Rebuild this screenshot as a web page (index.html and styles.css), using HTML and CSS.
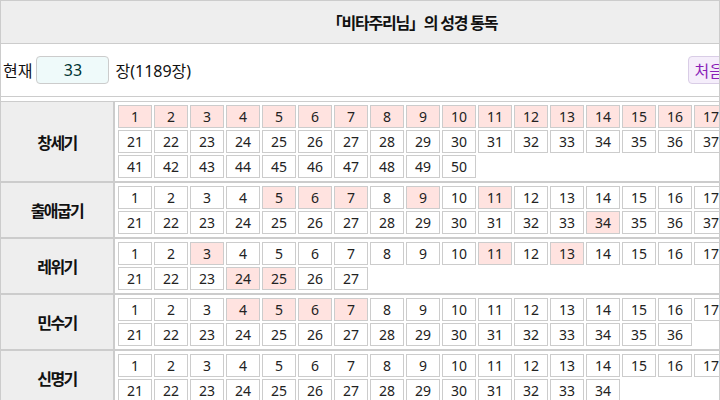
FILE: index.html
```html
<!DOCTYPE html>
<html lang="ko">
<head>
<meta charset="utf-8">
<title>성경 통독</title>
<link rel="stylesheet" href="styles.css">
</head>
<body>
<div class="frame">
  <div class="sheet">
    <div class="title">「비타주리님」의 성경 통독</div>
    <div class="controls">
      <span class="lbl">현재</span>
      <span class="count">33</span>
      <span class="total">장(1189장)</span>
      <button class="btn">처음</button>
    </div>
    <table class="books">
      <tr>
        <th class="book">창세기</th>
        <td class="chapters"><div class="grid">
<span class="ch read">1</span><span class="ch read">2</span><span class="ch read">3</span><span class="ch read">4</span><span class="ch read">5</span><span class="ch read">6</span><span class="ch read">7</span><span class="ch read">8</span><span class="ch read">9</span><span class="ch read">10</span><span class="ch read">11</span><span class="ch read">12</span><span class="ch read">13</span><span class="ch read">14</span><span class="ch read">15</span><span class="ch read">16</span><span class="ch read">17</span><span class="ch read">18</span><span class="ch">19</span><span class="ch">20</span>
<span class="ch">21</span><span class="ch">22</span><span class="ch">23</span><span class="ch">24</span><span class="ch">25</span><span class="ch">26</span><span class="ch">27</span><span class="ch">28</span><span class="ch">29</span><span class="ch">30</span><span class="ch">31</span><span class="ch">32</span><span class="ch">33</span><span class="ch">34</span><span class="ch">35</span><span class="ch">36</span><span class="ch">37</span><span class="ch">38</span><span class="ch">39</span><span class="ch">40</span>
<span class="ch">41</span><span class="ch">42</span><span class="ch">43</span><span class="ch">44</span><span class="ch">45</span><span class="ch">46</span><span class="ch">47</span><span class="ch">48</span><span class="ch">49</span><span class="ch">50</span>
        </div></td>
      </tr>
      <tr>
        <th class="book">출애굽기</th>
        <td class="chapters"><div class="grid">
<span class="ch">1</span><span class="ch">2</span><span class="ch">3</span><span class="ch">4</span><span class="ch read">5</span><span class="ch read">6</span><span class="ch read">7</span><span class="ch">8</span><span class="ch read">9</span><span class="ch">10</span><span class="ch read">11</span><span class="ch">12</span><span class="ch">13</span><span class="ch">14</span><span class="ch">15</span><span class="ch">16</span><span class="ch">17</span><span class="ch">18</span><span class="ch">19</span><span class="ch">20</span>
<span class="ch">21</span><span class="ch">22</span><span class="ch">23</span><span class="ch">24</span><span class="ch">25</span><span class="ch">26</span><span class="ch">27</span><span class="ch">28</span><span class="ch">29</span><span class="ch">30</span><span class="ch">31</span><span class="ch">32</span><span class="ch">33</span><span class="ch read">34</span><span class="ch">35</span><span class="ch">36</span><span class="ch">37</span><span class="ch">38</span><span class="ch">39</span><span class="ch">40</span>
        </div></td>
      </tr>
      <tr>
        <th class="book">레위기</th>
        <td class="chapters"><div class="grid">
<span class="ch">1</span><span class="ch">2</span><span class="ch read">3</span><span class="ch">4</span><span class="ch">5</span><span class="ch">6</span><span class="ch">7</span><span class="ch">8</span><span class="ch">9</span><span class="ch">10</span><span class="ch read">11</span><span class="ch">12</span><span class="ch read">13</span><span class="ch">14</span><span class="ch">15</span><span class="ch">16</span><span class="ch">17</span><span class="ch">18</span><span class="ch">19</span><span class="ch">20</span>
<span class="ch">21</span><span class="ch">22</span><span class="ch">23</span><span class="ch read">24</span><span class="ch read">25</span><span class="ch">26</span><span class="ch">27</span>
        </div></td>
      </tr>
      <tr>
        <th class="book">민수기</th>
        <td class="chapters"><div class="grid">
<span class="ch">1</span><span class="ch">2</span><span class="ch">3</span><span class="ch read">4</span><span class="ch read">5</span><span class="ch read">6</span><span class="ch read">7</span><span class="ch">8</span><span class="ch">9</span><span class="ch">10</span><span class="ch">11</span><span class="ch">12</span><span class="ch">13</span><span class="ch">14</span><span class="ch">15</span><span class="ch">16</span><span class="ch">17</span><span class="ch">18</span><span class="ch">19</span><span class="ch">20</span>
<span class="ch">21</span><span class="ch">22</span><span class="ch">23</span><span class="ch">24</span><span class="ch">25</span><span class="ch">26</span><span class="ch">27</span><span class="ch">28</span><span class="ch">29</span><span class="ch">30</span><span class="ch">31</span><span class="ch">32</span><span class="ch">33</span><span class="ch">34</span><span class="ch">35</span><span class="ch">36</span>
        </div></td>
      </tr>
      <tr>
        <th class="book">신명기</th>
        <td class="chapters"><div class="grid">
<span class="ch">1</span><span class="ch">2</span><span class="ch">3</span><span class="ch">4</span><span class="ch">5</span><span class="ch">6</span><span class="ch">7</span><span class="ch">8</span><span class="ch">9</span><span class="ch">10</span><span class="ch">11</span><span class="ch">12</span><span class="ch">13</span><span class="ch">14</span><span class="ch">15</span><span class="ch">16</span><span class="ch">17</span><span class="ch">18</span><span class="ch">19</span><span class="ch">20</span>
<span class="ch">21</span><span class="ch">22</span><span class="ch">23</span><span class="ch">24</span><span class="ch">25</span><span class="ch">26</span><span class="ch">27</span><span class="ch">28</span><span class="ch">29</span><span class="ch">30</span><span class="ch">31</span><span class="ch">32</span><span class="ch">33</span><span class="ch">34</span>
        </div></td>
      </tr>
    </table>
  </div>
</div>
</body>
</html>
```
FILE: styles.css
```css
html, body {
  margin: 0;
  padding: 0;
  background: #fff;
}
body {
  font-family: "Noto Sans", "Noto Sans CJK KR", sans-serif;
  color: #111;
}
.frame {
  width: 720px;
  height: 400px;
  box-sizing: border-box;
  border: 1px solid #ccc;
  border-bottom: 0;
  overflow: hidden;
}
.sheet {
  width: 840px;
}
.title {
  height: 42px;
  background: #eee;
  border-bottom: 1px solid #ccc;
  display: flex;
  align-items: center;
  justify-content: center;
  padding-right: 18px;
  font-size: 16px;
  font-weight: bold;
  letter-spacing: -1.2px;
}
.controls {
  height: 52px;
  border-bottom: 1px solid #ccc;
  display: flex;
  align-items: center;
  padding-left: 2px;
  font-size: 16px;
}
.count {
  width: 73px;
  height: 28px;
  box-sizing: border-box;
  margin-left: 4px;
  border: 1px solid #ccc;
  border-radius: 4px;
  background: #effafa;
  color: #033;
  display: flex;
  align-items: center;
  justify-content: center;
}
.total {
  margin-left: 6px;
}
.btn {
  margin-left: auto;
  margin-right: 110px;
  height: 28px;
  padding: 0 6px;
  border: 1px solid #d9cde6;
  border-radius: 4px;
  background: #f5eefb;
  color: #8b1fb8;
  font-family: inherit;
  font-size: 16px;
}
.books {
  border-collapse: separate;
  border-spacing: 0;
  margin-top: 4px;
}
.books th, .books td {
  border: 1px solid #ccc;
  padding: 2px;
}
.book {
  width: 113px;
  box-sizing: border-box;
  background: #eee;
  font-size: 16px;
  font-weight: bold;
  letter-spacing: -1.6px;
  color: #111;
  border-left: 0 !important;
}
.grid {
  width: 720px;
  display: flex;
  flex-wrap: wrap;
}
.ch {
  width: 34px;
  height: 23px;
  margin: 1px;
  box-sizing: border-box;
  border: 1px solid #ccc;
  font-size: 14px;
  line-height: 21px;
  text-align: center;
  color: #222;
}
.ch.read {
  background: #ffe3e0;
}
```
